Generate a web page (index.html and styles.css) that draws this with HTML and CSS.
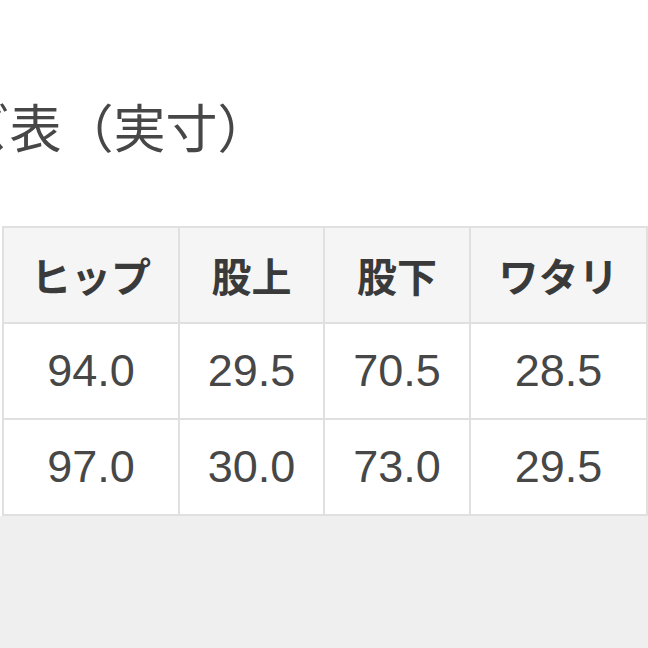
FILE: index.html
```html
<!DOCTYPE html>
<html lang="ja">
<head>
<meta charset="utf-8">
<link rel="stylesheet" href="styles.css">
</head>
<body>
<div class="sheet">
  <h1 class="title">サイズ表（実寸）</h1>
  <table class="size-table">
    <colgroup>
      <col class="c1"><col class="c2"><col class="c3"><col class="c4">
    </colgroup>
    <thead>
      <tr><th>ヒップ</th><th>股上</th><th>股下</th><th>ワタリ</th></tr>
    </thead>
    <tbody>
      <tr><td>94.0</td><td>29.5</td><td>70.5</td><td>28.5</td></tr>
      <tr><td>97.0</td><td>30.0</td><td>73.0</td><td>29.5</td></tr>
    </tbody>
  </table>
</div>
</body>
</html>
```
FILE: styles.css
```css
html, body {
  margin: 0;
  padding: 0;
}
body {
  width: 648px;
  height: 648px;
  overflow: hidden;
  background: #efefef;
  font-family: "Noto Sans CJK JP", sans-serif;
  color: #404040;
}
.sheet {
  background: #ffffff;
  height: 516px;
  padding-top: 100px;
  box-sizing: border-box;
  overflow: hidden;
}
.title {
  margin: 0 0 0 -145px;
  font-size: 52px;
  line-height: 52px;
  font-weight: 400;
  white-space: nowrap;
  color: #474747;
}
.size-table {
  margin: 74px 0 0 2px;
  border-collapse: collapse;
  table-layout: fixed;
  width: 644px;
}
.c1 { width: 176px; }
.c2 { width: 145px; }
.c3 { width: 146px; }
.c4 { width: 177px; }
.size-table th,
.size-table td {
  border: 2px solid #e0e0e0;
  height: 94px;
  padding: 0;
  text-align: center;
  vertical-align: middle;
}
.size-table th {
  background: #f5f5f5;
  font-family: "Noto Sans CJK JP", sans-serif;
  font-weight: 700;
  font-size: 40px;
  color: #3a3a3a;
}
.size-table td {
  background: #ffffff;
  font-family: "Liberation Sans", Arial, sans-serif;
  font-size: 45px;
  color: #474747;
}
```
